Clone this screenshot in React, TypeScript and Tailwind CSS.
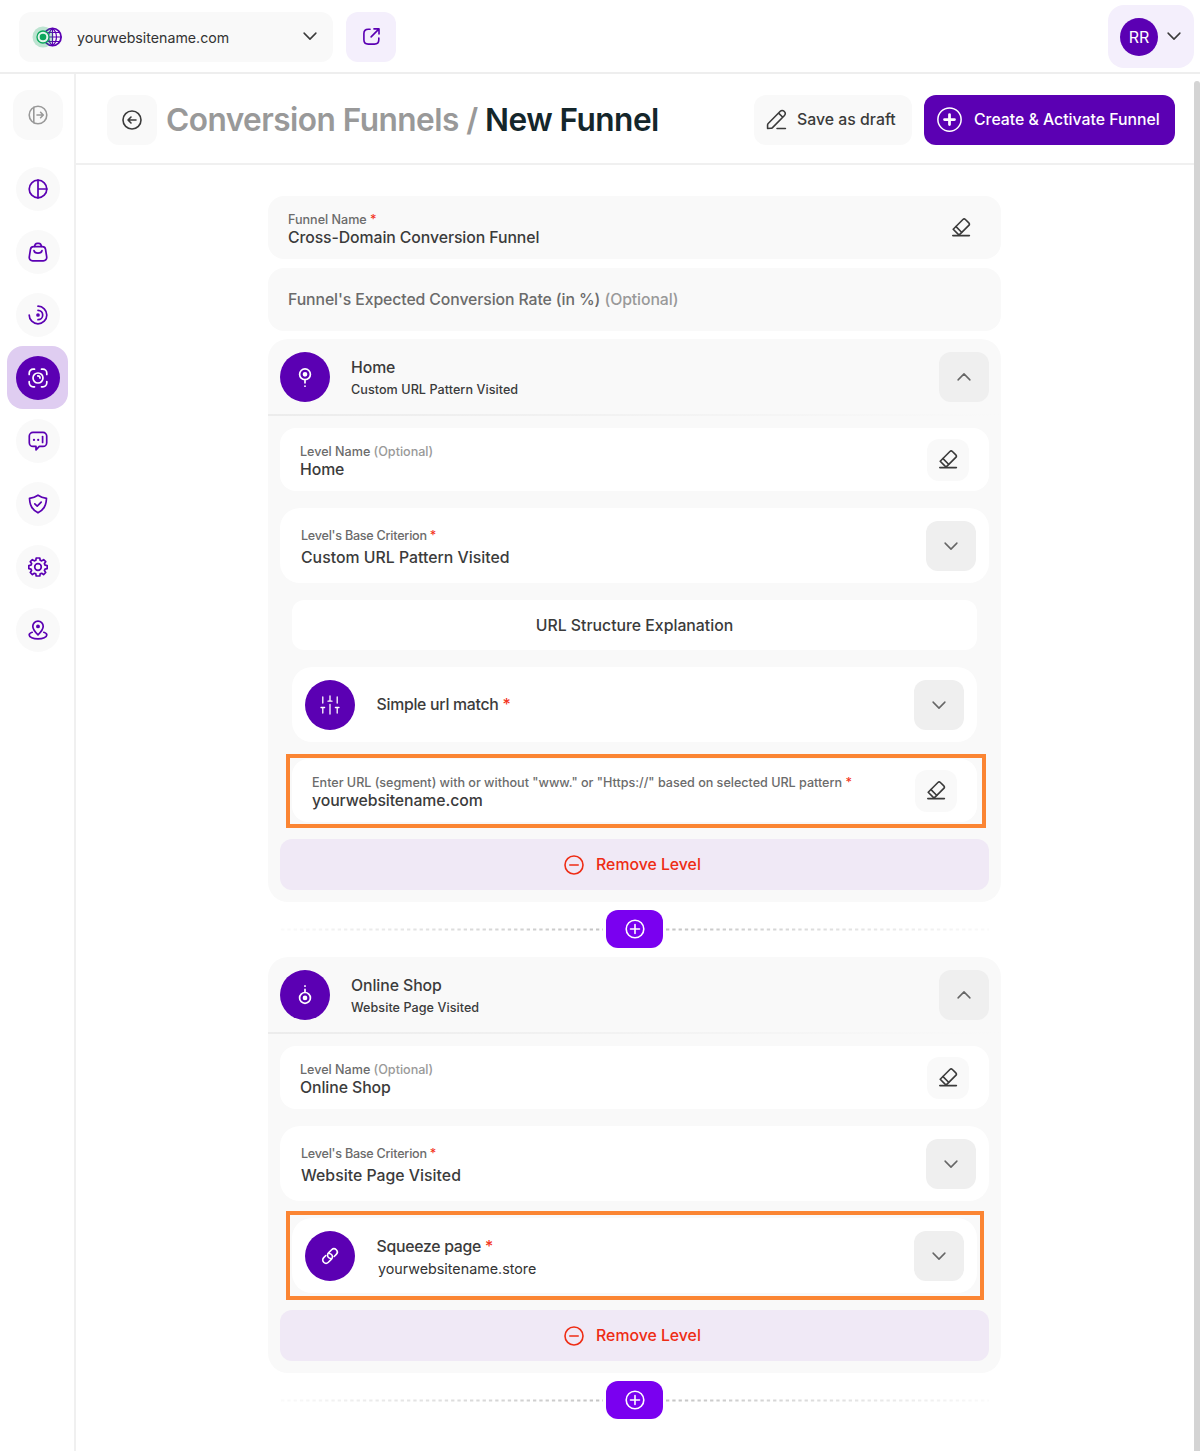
import type { ReactNode } from 'react';
import clsx from 'clsx';

function Svg({ size = 20, sw = 1.6, className, children }: { size?: number; sw?: number; className?: string; children: ReactNode }) {
    return (
        <svg
            width={size}
            height={size}
            viewBox="0 0 20 20"
            fill="none"
            stroke="currentColor"
            strokeWidth={sw}
            strokeLinecap="round"
            strokeLinejoin="round"
            className={clsx('shrink-0', className)}
        >
            {children}
        </svg>
    );
}

const NAV_ITEMS = [
    {
        id: 'dashboard',
        icon: (
            <>
                <circle cx="10" cy="10" r="8.8" />
                <path d="M10 1.2v17.6M10 10h8.8" />
            </>
        ),
    },
    {
        id: 'shop',
        icon: (
            <>
                <path d="M5.6 4.6h8.8c1.700 0 2.800 1 3.100 2.500l1.200 7.700c.3 2.200-1.200 4-3.400 4H4.700c-2.200 0-3.700-1.800-3.400-4l1.200-7.700C2.800 5.600 3.900 4.600 5.600 4.600z" />
                <path d="M6.600 4.400C6.800 2.500 7.800 1.300 9.300 1.300h1.400c1.500 0 2.500 1.200 2.700 3.100M6 8.600c.3 1.600 1.700 2.500 4 2.500s3.700-.9 4-2.500" />
            </>
        ),
    },
    {
        id: 'behavior',
        icon: (
            <>
                <path d="M10 1.2a8.8 8.8 0 1 1-8.8 8.8" />
                <path d="M10 5.3a4.7 4.7 0 0 1 0 9.4" />
                <circle cx="10" cy="10" r="1" fill="currentColor" />
            </>
        ),
    },
    {
        id: 'funnels',
        active: true,
        icon: (
            <>
                <path d="M1.2 6.5V5.2a4 4 0 0 1 4-4h1.3M13.5 1.2h1.3a4 4 0 0 1 4 4v1.3M18.8 13.5v1.3a4 4 0 0 1-4 4h-1.3M6.5 18.8H5.2a4 4 0 0 1-4-4v-1.3" />
                <circle cx="10" cy="10" r="5" />
                <path d="M9.8 7.9a2.2 2.2 0 0 1 2.2 2.2" />
            </>
        ),
    },
    {
        id: 'feedback',
        icon: (
            <>
                <path d="M5 1.4h10a3.7 3.7 0 0 1 3.7 3.7v6.6a3.7 3.7 0 0 1-3.7 3.7h-3.7L8 18.8v-3.4H5a3.7 3.7 0 0 1-3.7-3.7V5.1A3.7 3.7 0 0 1 5 1.4z" />
                <path d="M14.6 5.6v5.8" />
                <path d="M6 8.8v.1M10.2 8.8v.1" strokeWidth="2.2" />
            </>
        ),
    },
    {
        id: 'privacy',
        icon: (
            <>
                <path d="M10 1.2c2.4 1.6 5 2.6 8.5 3.1-.1 2.5-.5 4.7-1.1 6.5-1 3.2-3.4 5.900-7.400 8-4-2.100-6.400-4.800-7.400-8-.6-1.800-1-4-1.100-6.500C5 3.800 7.600 2.800 10 1.200z" />
                <path d="M6.8 9.8l2.4 2.3 4-4" />
            </>
        ),
    },
    {
        id: 'settings',
        icon: (
            <>
                <path d="M8.2 1h3.6l.4 2.3 1.5.6 1.9-1.3 2.1 2.1-1.3 1.9.6 1.5 2.2.4v3.2l-2.2.4-.6 1.5 1.3 1.9-2.1 2.1-1.9-1.3-1.5.6-.4 2.1H8.2l-.4-2.1-1.5-.6-1.9 1.3-2.1-2.1 1.3-1.9-.6-1.5L.8 11.7V8.5L3 8.1l.6-1.5-1.3-1.900 2.100-2.100 1.900 1.300 1.500-.6z" />
                <circle cx="10" cy="10" r="3.3" />
            </>
        ),
    },
    {
        id: 'visitors',
        icon: (
            <>
                <path d="M10 14.8C7 12 4.8 9.3 4.8 6.3a5.2 5.2 0 0 1 10.4 0c0 3-2.2 5.7-5.2 8.5z" />
                <circle cx="10" cy="6.4" r="1.1" fill="currentColor" />
                <path d="M4.2 12.3c-1.8.6-3 1.5-3 2.6 0 2.2 3.9 3.9 8.8 3.9s8.8-1.7 8.8-3.9c0-1.1-1.2-2-3-2.6" />
            </>
        ),
    },
];

function Eraser() {
    return (
        <Svg sw={1.6} className="mb-px">
            <path d="M2.2 12.2L11.9 2.5a1.8 1.8 0 0 1 2.5 0l3.4 3.4a1.8 1.8 0 0 1 0 2.5l-8.5 8.5a1.8 1.8 0 0 1-2.5 0l-4.6-4.7z" />
            <path d="M5 9.6l5.6 5.7M1.8 18.6h16.6" />
        </Svg>
    );
}

function Chevron({ up, className }: { up?: boolean; className?: string }) {
    return (
        <Svg sw={1.5} className={clsx(up && 'rotate-180', className)}>
            <path d="M4.1 7.1l5.9 6 5.9-6" />
        </Svg>
    );
}

function ToggleButton({ up }: { up?: boolean }) {
    return (
        <button className="flex size-[50px] shrink-0 items-center justify-center rounded-xl bg-[#efefef] text-[#666]">
            <Chevron up={up} />
        </button>
    );
}

function Required() {
    return <span className="text-[#f3341c]">*</span>;
}

function Field({ label, optional, value, flat }: { label: string; optional?: boolean; value: string; flat?: boolean }) {
    return (
        <div className={clsx('flex h-[63px] items-center justify-between rounded-2xl px-5', flat ? 'bg-[#f9f9f9]' : 'bg-white')}>
            <div className="pt-[2px]">
                <div className="text-[12.6px] leading-[18px] tracking-[-0.02px] text-[#6b6b6b]">
                    {label} {optional ? <span className="text-[#999]">(Optional)</span> : <Required />}
                </div>
                <div className="text-[15.8px] leading-[18px] tracking-[-0.08px]">{value}</div>
            </div>
            <button className={clsx('flex size-[42px] items-center justify-center rounded-xl', flat ? 'pl-px' : 'bg-[#f9f9f9]')}>
                <Eraser />
            </button>
        </div>
    );
}

function Criterion({ value }: { value: string }) {
    return (
        <div className="mt-[17px] flex h-[75px] items-center justify-between rounded-[20px] bg-white pr-[13px] pl-[21px]">
            <div className="pt-[5px]">
                <div className="text-[12.6px] leading-[18px] tracking-[-0.25px] text-[#6b6b6b]">
                    Level's Base Criterion <Required />
                </div>
                <div className="mt-[2px] text-[15.8px] leading-[22px] tracking-[0.02px]">{value}</div>
            </div>
            <ToggleButton />
        </div>
    );
}

function IconDisc({ children }: { children: ReactNode }) {
    return <div className="flex size-[50px] shrink-0 items-center justify-center rounded-full bg-[#5b00b3] text-white">{children}</div>;
}

function LevelPanel({ title, subtitle, icon, children }: { title: string; subtitle: string; icon: ReactNode; children: ReactNode }) {
    return (
        <section className="rounded-[20px] bg-[#f9f9f9] pb-3">
            <header className="flex h-[75px] items-center px-3">
                <IconDisc>{icon}</IconDisc>
                <div className="ml-[21px] flex-1 pt-1">
                    <div className="text-[15.8px] leading-[22px] tracking-[-0.08px]">{title}</div>
                    <div className="text-[12.6px] leading-[22px] tracking-[0.05px]">{subtitle}</div>
                </div>
                <ToggleButton up />
            </header>
            <div className="h-[2px] bg-gradient-to-r from-[#ececec] to-[#f9f9f9]" />
            <div className="px-3 pt-3">{children}</div>
        </section>
    );
}

function RemoveLevel() {
    return (
        <button className="flex h-[50.5px] w-full items-center justify-center gap-3 rounded-xl bg-[#f0e9f6] pt-px pr-1 text-[15.8px] text-[#ee2c14]">
            <Svg>
                <circle cx="10" cy="10" r="9" />
                <path d="M5.8 10h8.4" />
            </Svg>
            Remove Level
        </button>
    );
}

function AddLevel() {
    return (
        <div className="mt-[8.5px] mb-[9px] flex items-center justify-center gap-[3px] px-3">
            <svg className="h-[3px] flex-1">
                <defs>
                    <linearGradient id="fadeLeft" gradientUnits="userSpaceOnUse" x1="0" y1="0" x2="323" y2="0">
                        <stop offset="0" stopColor="#c4c4c4" stopOpacity=".08" />
                        <stop offset="1" stopColor="#c4c4c4" />
                    </linearGradient>
                </defs>
                <line x1="1" y1="1.5" x2="323" y2="1.5" stroke="url(#fadeLeft)" strokeWidth="2.2" strokeDasharray="3.3 3" />
            </svg>
            <button className="flex h-[38px] w-[57px] items-center justify-center rounded-xl bg-[#7a00f0] text-white">
                <Svg>
                    <circle cx="10" cy="10" r="8.8" />
                    <path d="M10 5.5v9M5.5 10h9" />
                </Svg>
            </button>
            <svg className="h-[3px] flex-1">
                <defs>
                    <linearGradient id="fadeRight" gradientUnits="userSpaceOnUse" x1="0" y1="0" x2="323" y2="0">
                        <stop offset="0" stopColor="#c4c4c4" />
                        <stop offset="1" stopColor="#c4c4c4" stopOpacity=".08" />
                    </linearGradient>
                </defs>
                <line x1="0" y1="1.5" x2="323" y2="1.5" stroke="url(#fadeRight)" strokeWidth="2.2" strokeDasharray="3.3 3" />
            </svg>
        </div>
    );
}

function TopBar() {
    return (
        <div className="flex h-[74px] items-start justify-between border-b-2 border-[#eeeeee] pr-[6px] pl-[19px]">
            <div className="flex gap-[13px] pt-3">
                <div className="flex h-[50px] w-[314px] items-center rounded-xl bg-[#f9f9f9] px-[13px]">
                    <svg width="32" height="22" viewBox="0 0 32 22" fill="none" className="mb-px">
                        <circle cx="20.5" cy="11" r="8.6" stroke="#5b00b3" strokeWidth="1.8" />
                        <path
                            d="M12 11h17.5M20.5 2.2v17.6M13.5 6.5h14M13.5 15.5h14M20.5 2.2c-5.3 4.8-5.3 12.8 0 17.6M20.5 2.2c5.3 4.8 5.3 12.8 0 17.6"
                            stroke="#5b00b3"
                            strokeWidth="1.2"
                        />
                        <circle cx="11" cy="11" r="10.5" fill="#0ba65c" fillOpacity=".25" />
                        <circle cx="11" cy="11" r="6" fill="#e4f5ec" stroke="#0ba65c" strokeWidth="1.3" />
                        <circle cx="11" cy="11" r="3.3" fill="#0ba65c" />
                    </svg>
                    <span className="ml-[13px] flex-1 pt-px text-[14.2px] font-normal text-[#333]">yourwebsitename.com</span>
                    <Chevron className="mb-[3px]" />
                </div>
                <button className="flex size-[50px] items-center justify-center rounded-xl bg-[#f4effc] text-[#5b00b3]">
                    <Svg size={19} sw={1.7} className="mb-px">
                        <path d="M8.5 2.3H6.6C3.4 2.3 2 3.7 2 6.9v6.5C2 16.6 3.4 18 6.6 18h6.5c3.2 0 4.6-1.4 4.6-4.6v-1.7M9.6 10.4l7.8-7.9M12.6 2h5.3v5.3" />
                    </Svg>
                </button>
            </div>
            <button className="mt-[5px] flex h-[63px] w-[86px] items-center rounded-2xl bg-[#f4effc] pl-3">
                <span className="flex size-[38px] items-center justify-center rounded-full bg-[#5b00b3] text-[16px] font-normal text-white">RR</span>
                <Chevron className="mb-[2px] ml-[6px]" />
            </button>
        </div>
    );
}

function Sidebar() {
    return (
        <nav className="flex w-[76px] shrink-0 flex-col items-center border-r-2 border-[#f0f0f0] pt-4 pl-px">
            <button className="flex size-[50px] items-center justify-center rounded-2xl bg-[#f9f9f9] text-[#999]">
                <Svg>
                    <circle cx="10" cy="10" r="8.8" />
                    <path d="M5.8 2.3v15.4M9 10h6M12.6 7.3L15.3 10l-2.7 2.7" />
                </Svg>
            </button>
            <div className="mt-[17px] flex flex-col">
                {NAV_ITEMS.map((item) => (
                    <div
                        key={item.id}
                        className={clsx('flex h-[63px] w-[61px] items-center justify-center rounded-2xl', item.active && 'bg-[#dfcdf1]')}
                    >
                        <div
                            className={clsx(
                                'flex size-11 items-center justify-center rounded-full',
                                item.active ? 'bg-[#5b00b3] text-white' : 'bg-[#f9f9f9] text-[#5b00b3]'
                            )}
                        >
                            <Svg sw={1.7}>{item.icon}</Svg>
                        </div>
                    </div>
                ))}
            </div>
        </nav>
    );
}

export default function App() {
    return (
        <div className="flex h-[1451px] w-[1200px] flex-col overflow-hidden bg-white font-['Inter',sans-serif] font-medium text-[#3b3b3b]">
            <TopBar />
            <div className="flex flex-1">
                <Sidebar />
                <main className="flex-1">
                    <div className="flex h-[91px] items-center border-b-2 border-[#f0f0f0] pt-[2px] pr-[19px] pl-[31px]">
                        <button className="flex size-[50px] items-center justify-center rounded-xl bg-[#f9f9f9]">
                            <Svg>
                                <circle cx="10" cy="10" r="9" />
                                <path d="M14 10H6M9 7l-3 3 3 3" />
                            </Svg>
                        </button>
                        <h1 className="ml-[9px] flex-1 pt-px text-[31.6px] font-semibold tracking-[-0.54px] whitespace-nowrap text-[#999]">
                            Conversion Funnels / <span className="text-[#14262b]">New Funnel</span>
                        </h1>
                        <button className="flex h-[50px] w-[158px] items-center rounded-xl bg-[#f9f9f9] pl-3 text-[15.8px] tracking-[0.02px]">
                            <Svg size={21} sw={1.5} className="mr-[10px]">
                                <path d="M1.5 18.500v-3.200c0-.6.2-1.100.6-1.500L13.600 2.200a2.500 2.500 0 0 1 3.600 0l.4.4a2.500 2.500 0 0 1 0 3.600L6.200 17.700c-.4.4-1 .7-1.500.7l-3.200.1zM12 3.900l4 4M10.500 18.600h8" />
                            </Svg>
                            Save as draft
                        </button>
                        <button className="ml-3 flex h-[50px] w-[251px] items-center rounded-xl bg-[#5b00b3] pl-[13px] text-[15.8px] text-white">
                            <Svg size={25} sw={1.2} className="mr-3">
                                <circle cx="10" cy="10" r="9.3" />
                                <path d="M10 6v8M6 10h8" strokeWidth="2.2" />
                            </Svg>
                            Create &amp; Activate Funnel
                        </button>
                    </div>

                    <div className="ml-[192px] w-[733px] pt-[31px]">
                        <Field flat label="Funnel Name" value="Cross-Domain Conversion Funnel" />
                        <div className="my-[8.5px] flex h-[63px] items-center rounded-2xl bg-[#f9f9f9] px-5 pt-[2px] text-[15.8px] tracking-[-0.1px] text-[#6b6b6b]">
                            <span>
                                Funnel's Expected Conversion Rate (in %) <span className="text-[#999]">(Optional)</span>
                            </span>
                        </div>

                        <LevelPanel
                            title="Home"
                            subtitle="Custom URL Pattern Visited"
                            icon={
                                <Svg sw={1.7}>
                                    <circle cx="10" cy="7.3" r="5.4" />
                                    <circle cx="10" cy="7.3" r="1.5" fill="currentColor" />
                                    <path d="M10 13.5v2.3M10 19v.3" />
                                </Svg>
                            }
                        >
                            <Field label="Level Name" optional value="Home" />
                            <Criterion value="Custom URL Pattern Visited" />
                            <div className="mx-3 mt-[17px] flex h-[50px] items-center justify-center rounded-xl bg-white pt-px text-[15.8px]">
                                URL Structure Explanation
                            </div>
                            <div className="mx-3 mt-[17px] flex h-[75px] items-center rounded-[20px] bg-white px-[13px]">
                                <IconDisc>
                                    <Svg sw={1.3}>
                                        <path d="M2.8 2v6M2.8 13.5V18M1 12.5h3.6M10 1v5M8 6.2h4M10 9.5V19M17.2 2v6M17.2 13.5V18M15.4 12.5H19" />
                                    </Svg>
                                </IconDisc>
                                <div className="ml-[21.5px] flex-1 pt-px text-[15.8px] tracking-[-0.27px]">
                                    Simple url match <Required />
                                </div>
                                <ToggleButton />
                            </div>
                            <div className="relative mx-3 mt-[17px]">
                                <Field label={'Enter URL (segment) with or without "www." or "Https://" based on selected URL pattern'} value="yourwebsitename.com" />
                                <div className="absolute -top-[5px] -left-[6px] h-[74px] w-[700px] border-4 border-[#fb8533]" />
                            </div>
                            <div className="pt-[17px]">
                                <RemoveLevel />
                            </div>
                        </LevelPanel>

                        <AddLevel />

                        <LevelPanel
                            title="Online Shop"
                            subtitle="Website Page Visited"
                            icon={
                                <Svg sw={1.7}>
                                    <circle cx="10" cy="12.9" r="5.4" />
                                    <circle cx="10" cy="12.9" r="1.5" fill="currentColor" />
                                    <path d="M10 6.7V4.4M10 1.2v-.3" />
                                </Svg>
                            }
                        >
                            <Field label="Level Name" optional value="Online Shop" />
                            <Criterion value="Website Page Visited" />
                            <div className="relative mx-3 mt-[17px] flex h-[75px] items-center rounded-[20px] bg-white px-[13px]">
                                <IconDisc>
                                    <Svg sw={1.6}>
                                        <g transform="rotate(-45 10 10)">
                                            <path d="M12.6 13.3h3a3.3 3.3 0 0 0 0-6.6h-4.4a3.3 3.3 0 0 0-3.3 3.3c0 .9.3 1.6.8 2.2" />
                                            <path d="M7.4 6.7h-3a3.3 3.3 0 0 0 0 6.6h4.4a3.3 3.3 0 0 0 3.3-3.3c0-.9-.3-1.6-.8-2.2" />
                                        </g>
                                    </Svg>
                                </IconDisc>
                                <div className="ml-[21.5px] flex-1 pt-[3px]">
                                    <div className="text-[15.8px] leading-[23px] tracking-[-0.27px]">
                                        Squeeze page <Required />
                                    </div>
                                    <div className="pl-[1.5px] text-[14.3px] leading-[22px] font-normal text-[#333]">yourwebsitename.store</div>
                                </div>
                                <ToggleButton />
                                <div className="absolute -top-[7px] -left-[6px] h-[89px] w-[698px] border-4 border-[#fb8533]" />
                            </div>
                            <div className="pt-[17px]">
                                <RemoveLevel />
                            </div>
                        </LevelPanel>

                        <AddLevel />
                    </div>
                </main>
                <div className="mt-[7px] w-[6px] shrink-0 rounded-t-full bg-[#d4d4d4]" />
            </div>
        </div>
    );
}
